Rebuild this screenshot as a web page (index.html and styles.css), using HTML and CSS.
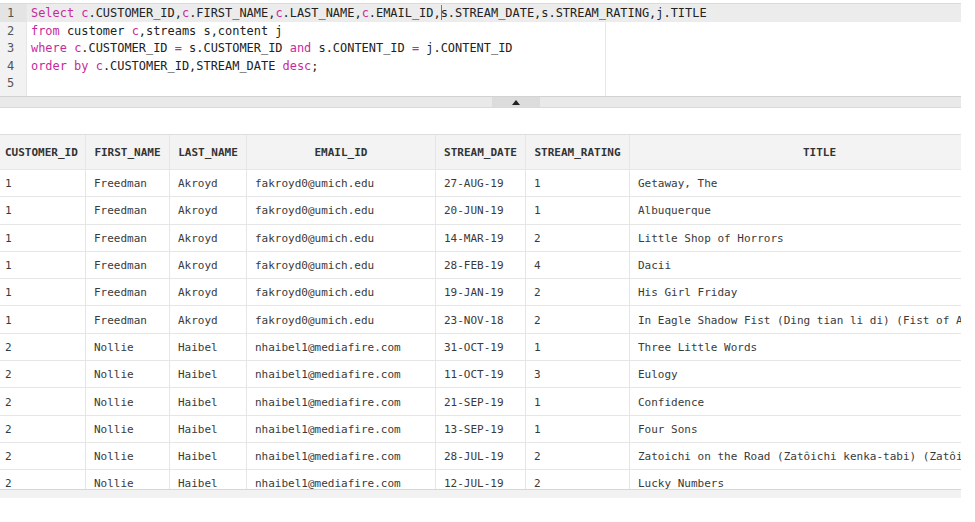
FILE: index.html
```html
<!DOCTYPE html>
<html>
<head>
<meta charset="utf-8">
<link rel="stylesheet" href="styles.css">
</head>
<body>
<div class="page">
  <div class="editor">
    <div class="gutter">
      <div class="ln active">1</div>
      <div class="ln">2</div>
      <div class="ln">3</div>
      <div class="ln">4</div>
      <div class="ln">5</div>
    </div>
    <div class="code">
      <div class="line active"><span class="kw">Select</span> <span class="kw">c</span>.CUSTOMER_ID,<span class="kw">c</span>.FIRST_NAME,<span class="kw">c</span>.LAST_NAME,<span class="kw">c</span>.EMAIL_ID,<span class="cursor"></span>s.STREAM_DATE,s.STREAM_RATING,j.TITLE</div>
      <div class="line"><span class="kw">from</span> customer <span class="kw">c</span>,streams s,content j</div>
      <div class="line"><span class="kw">where</span> <span class="kw">c</span>.CUSTOMER_ID <span class="kw">=</span> s.CUSTOMER_ID <span class="kw">and</span> s.CONTENT_ID <span class="kw">=</span> j.CONTENT_ID</div>
      <div class="line"><span class="kw">order by</span> <span class="kw">c</span>.CUSTOMER_ID,STREAM_DATE <span class="kw">desc</span>;</div>
      <div class="line"></div>
    </div>
  </div>
  <div class="splitter">
    <div class="handle"><span class="tri"></span></div>
  </div>
  <div class="results">
    <table class="grid">
      <colgroup>
        <col class="c1"><col class="c2"><col class="c3"><col class="c4"><col class="c5"><col class="c6"><col class="c7">
      </colgroup>
      <thead>
        <tr><th>CUSTOMER_ID</th><th>FIRST_NAME</th><th>LAST_NAME</th><th>EMAIL_ID</th><th>STREAM_DATE</th><th>STREAM_RATING</th><th>TITLE</th></tr>
      </thead>
      <tbody>
        <tr><td>1</td><td>Freedman</td><td>Akroyd</td><td>fakroyd0@umich.edu</td><td>27-AUG-19</td><td>1</td><td>Getaway, The</td></tr>
        <tr><td>1</td><td>Freedman</td><td>Akroyd</td><td>fakroyd0@umich.edu</td><td>20-JUN-19</td><td>1</td><td>Albuquerque</td></tr>
        <tr><td>1</td><td>Freedman</td><td>Akroyd</td><td>fakroyd0@umich.edu</td><td>14-MAR-19</td><td>2</td><td>Little Shop of Horrors</td></tr>
        <tr><td>1</td><td>Freedman</td><td>Akroyd</td><td>fakroyd0@umich.edu</td><td>28-FEB-19</td><td>4</td><td>Dacii</td></tr>
        <tr><td>1</td><td>Freedman</td><td>Akroyd</td><td>fakroyd0@umich.edu</td><td>19-JAN-19</td><td>2</td><td>His Girl Friday</td></tr>
        <tr><td>1</td><td>Freedman</td><td>Akroyd</td><td>fakroyd0@umich.edu</td><td>23-NOV-18</td><td>2</td><td>In Eagle Shadow Fist (Ding tian li di) (Fist of Anger)</td></tr>
        <tr><td>2</td><td>Nollie</td><td>Haibel</td><td>nhaibel1@mediafire.com</td><td>31-OCT-19</td><td>1</td><td>Three Little Words</td></tr>
        <tr><td>2</td><td>Nollie</td><td>Haibel</td><td>nhaibel1@mediafire.com</td><td>11-OCT-19</td><td>3</td><td>Eulogy</td></tr>
        <tr><td>2</td><td>Nollie</td><td>Haibel</td><td>nhaibel1@mediafire.com</td><td>21-SEP-19</td><td>1</td><td>Confidence</td></tr>
        <tr><td>2</td><td>Nollie</td><td>Haibel</td><td>nhaibel1@mediafire.com</td><td>13-SEP-19</td><td>1</td><td>Four Sons</td></tr>
        <tr><td>2</td><td>Nollie</td><td>Haibel</td><td>nhaibel1@mediafire.com</td><td>28-JUL-19</td><td>2</td><td>Zatoichi on the Road (Zatôichi kenka-tabi) (Zatôichi 5)</td></tr>
        <tr><td>2</td><td>Nollie</td><td>Haibel</td><td>nhaibel1@mediafire.com</td><td>12-JUL-19</td><td>2</td><td>Lucky Numbers</td></tr>
      </tbody>
    </table>
  </div>
  <div class="hscroll"></div>
</div>
</body>
</html>
```

FILE: styles.css
```css
html, body {
  margin: 0;
  padding: 0;
  background: #ffffff;
}

.page {
  width: 961px;
  overflow: hidden;
  padding-top: 3px;
  font-family: "DejaVu Sans Mono", "Liberation Mono", monospace;
  color: #333;
}

.editor {
  display: flex;
  height: 92px;
  border-top: 1px solid #dadada;
}

.gutter {
  width: 26px;
  flex: none;
  background: #f2f2f2;
  border-right: 1px solid #e6e6e6;
}

.ln {
  height: 17.6px;
  line-height: 19px;
  font-size: 12px;
  color: #555;
  padding-left: 7px;
}

.ln.active {
  background: #e4e4e4;
}

.code {
  flex: 1;
  background-image: linear-gradient(to right, transparent 578px, #e8e8e8 578px, #e8e8e8 579px, transparent 579px);
}

.line {
  height: 17.6px;
  line-height: 19px;
  font-size: 11.95px;
  padding-left: 4px;
  color: #222;
  white-space: pre;
}

.line.active {
  background: #ececec;
}

.kw {
  color: #c72a9c;
}

.cursor {
  display: inline-block;
  width: 1px;
  height: 15px;
  background: #777;
  vertical-align: -3px;
  margin-right: -1px;
}

.splitter {
  height: 10px;
  background: #e9e9e9;
  border-top: 1px solid #d2d2d2;
  border-bottom: 1px solid #dadada;
  display: flex;
}

.handle {
  margin-left: 492px;
  width: 48px;
  height: 10px;
  background: #dcdcdc;
  display: flex;
  align-items: center;
  justify-content: center;
}

.tri {
  width: 0;
  height: 0;
  border-left: 4px solid transparent;
  border-right: 4px solid transparent;
  border-bottom: 5px solid #222;
}

.results {
  margin-top: 26px;
  height: 354px;
  overflow: hidden;
  border-top: 1px solid #dedede;
}

.grid {
  border-collapse: separate;
  border-spacing: 0;
  table-layout: fixed;
  width: 1013px;
  margin-left: -3px;
  font-size: 11px;
}

.c1 { width: 89px; }
.c2 { width: 84px; }
.c3 { width: 77px; }
.c4 { width: 189px; }
.c5 { width: 90px; }
.c6 { width: 104px; }
.c7 { width: 380px; }

.grid th,
.grid td {
  padding: 0 8px;
  border-right: 1px solid #e6e6e6;
  border-bottom: 1px solid #e6e6e6;
  white-space: nowrap;
  overflow: hidden;
}

.grid th {
  height: 34px;
  background: #f3f3f3;
  font-weight: bold;
  color: #333;
  text-align: center;
}

.grid td {
  height: 25.3px;
  padding-top: 1px;
  text-align: left;
  color: #3a3a3a;
}

.hscroll {
  height: 8px;
  background: #f2f2f2;
  border-top: 1px solid #d6d6d6;
}
```
